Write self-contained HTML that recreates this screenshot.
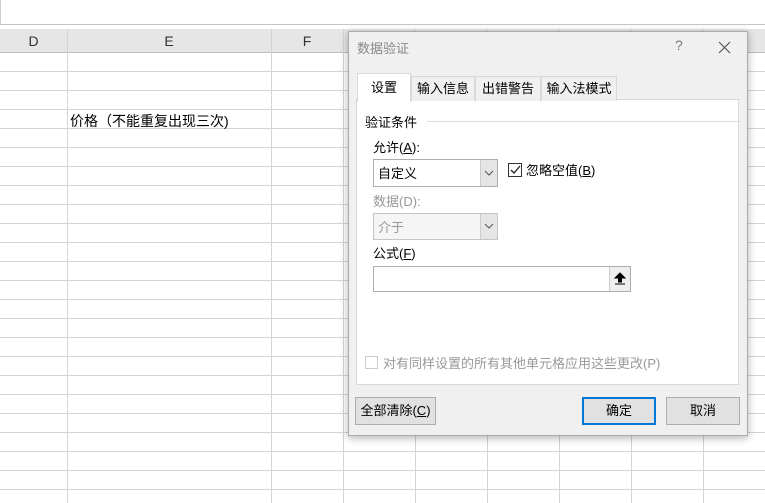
<!DOCTYPE html>
<html><head><meta charset="utf-8"><style>
*{margin:0;padding:0;box-sizing:border-box}
body{width:765px;height:503px;overflow:hidden;background:#fff;position:relative;font-family:"Liberation Sans","Noto Sans CJK SC",sans-serif;font-size:12px;color:#000}
.a{position:absolute}
.grid{left:0;top:53px;width:765px;height:450px;background-image:linear-gradient(#d4d4d4 1px,transparent 1px);background-size:765px 19px;background-position:0 18px}
.v{position:absolute;top:29px;bottom:0;width:1px;background:#d4d4d4}
.hdr{left:0;top:29px;width:765px;height:24px;background:#e6e6e6;border-bottom:1px solid #bdbdbd}
.hl{position:absolute;top:0;font-size:14px;color:#333;line-height:24px;text-align:center}
.dlg{left:348px;top:31px;width:400px;height:405px;background:#f0f0f0;border:1px solid #aaa;box-shadow:0 2px 8px rgba(0,0,0,.3)}
.btn{position:absolute;height:28px;background:#e1e1e1;border:1px solid #adadad;text-align:center;line-height:26px;font-size:13px}
.tab{position:absolute;top:44px;height:25px;border:1px solid #d9d9d9;border-bottom:none;background:#f0f0f0;font-size:13px;line-height:24px;text-align:center}
.lbl{position:absolute;font-size:13px}
.arr{position:absolute;right:0;top:0;width:17px;background:#e5e5e5;border-left:1px solid #ccc}
</style></head><body>
<div class="a" style="left:0;top:0;width:765px;height:25px;border-bottom:1px solid #c6c6c6;border-left:1px solid #ccc"></div>
<div class="a grid"></div>
<div class="a hdr">
<div class="hl" style="left:0;width:67px">D</div>
<div class="hl" style="left:67px;width:204px">E</div>
<div class="hl" style="left:271px;width:72px">F</div>
</div>
<div class="v" style="left:67px"></div><div class="v" style="left:271px"></div><div class="v" style="left:343px"></div>
<div class="v" style="left:415px"></div><div class="v" style="left:487px"></div><div class="v" style="left:559px"></div><div class="v" style="left:631px"></div><div class="v" style="left:703px"></div>
<div class="a" style="left:70px;top:112px;font-size:14px;line-height:18px">价格（不能重复出现三次)</div>

<div class="a dlg">
<div class="a" style="left:8px;top:6px;font-size:13px;color:#888">数据验证</div>
<div class="a" style="left:326px;top:5px;font-size:14px;color:#777">?</div>
<svg class="a" style="left:369px;top:9px" width="13" height="13"><path d="M1 1L12 12M12 1L1 12" stroke="#555" stroke-width="1.2"/></svg>
<div class="a" style="left:7px;top:67px;width:383px;height:286px;background:#fff;border:1px solid #d9d9d9"></div>
<div class="tab" style="left:8px;top:41px;height:29px;width:54px;background:#fff;line-height:28px;z-index:2">设置</div>
<div class="tab" style="left:62px;width:64px">输入信息</div>
<div class="tab" style="left:126px;width:66px">出错警告</div>
<div class="tab" style="left:192px;width:76px">输入法模式</div>
<div class="lbl" style="left:16px;top:80px">验证条件</div>
<div class="a" style="left:78px;top:89px;width:314px;height:1px;background:#ddd"></div>
<div class="lbl" style="left:24px;top:105px">允许(<u>A</u>):</div>
<div class="a" style="left:24px;top:127px;width:125px;height:28px;border:1px solid #adadad;background:#fff"><span style="position:absolute;left:4px;top:3px;font-size:13px">自定义</span><div class="arr" style="height:26px"><svg width="16" height="26"><path d="M4 11L8 15L12 11" stroke="#555" fill="none"/></svg></div></div>
<div class="a" style="left:159px;top:131px;width:14px;height:14px;border:1px solid #333;background:#fff"><svg width="12" height="12" style="position:absolute;left:0;top:0"><path d="M2 6L5 9L11 2" stroke="#222" stroke-width="1.3" fill="none"/></svg></div>
<div class="lbl" style="left:177px;top:128px">忽略空值(<u>B</u>)</div>
<div class="lbl" style="left:24px;top:159px;color:#999">数据(D):</div>
<div class="a" style="left:24px;top:181px;width:125px;height:27px;border:1px solid #c5c5c5;background:#f5f5f5"><span style="position:absolute;left:4px;top:3px;font-size:13px;color:#999">介于</span><div class="arr" style="height:25px"><svg width="16" height="25"><path d="M4 10L8 14L12 10" stroke="#555" fill="none"/></svg></div></div>
<div class="lbl" style="left:24px;top:211px">公式(<u>F</u>)</div>
<div class="a" style="left:24px;top:234px;width:258px;height:26px;border:1px solid #adadad;background:#fff"><div style="position:absolute;right:0;top:0;width:21px;height:24px;background:#eee;border-left:1px solid #ccc"><svg width="20" height="24"><path d="M10 6L5 11H8.5V15H11.5V11H15Z M5 17H15" stroke="#000" fill="#000" stroke-width="1"/></svg></div></div>
<div class="a" style="left:16px;top:324px;width:13px;height:13px;border:1px solid #ccc;background:#fff"></div>
<div class="lbl" style="left:34px;top:321px;color:#999">对有同样设置的所有其他单元格应用这些更改(P)</div>
<div class="btn" style="left:6px;top:365px;width:81px">全部清除(<u>C</u>)</div>
<div class="btn" style="left:233px;top:365px;width:74px;border:2px solid #0078d7;line-height:24px">确定</div>
<div class="btn" style="left:317px;top:365px;width:74px">取消</div>
</div>
</body></html>
